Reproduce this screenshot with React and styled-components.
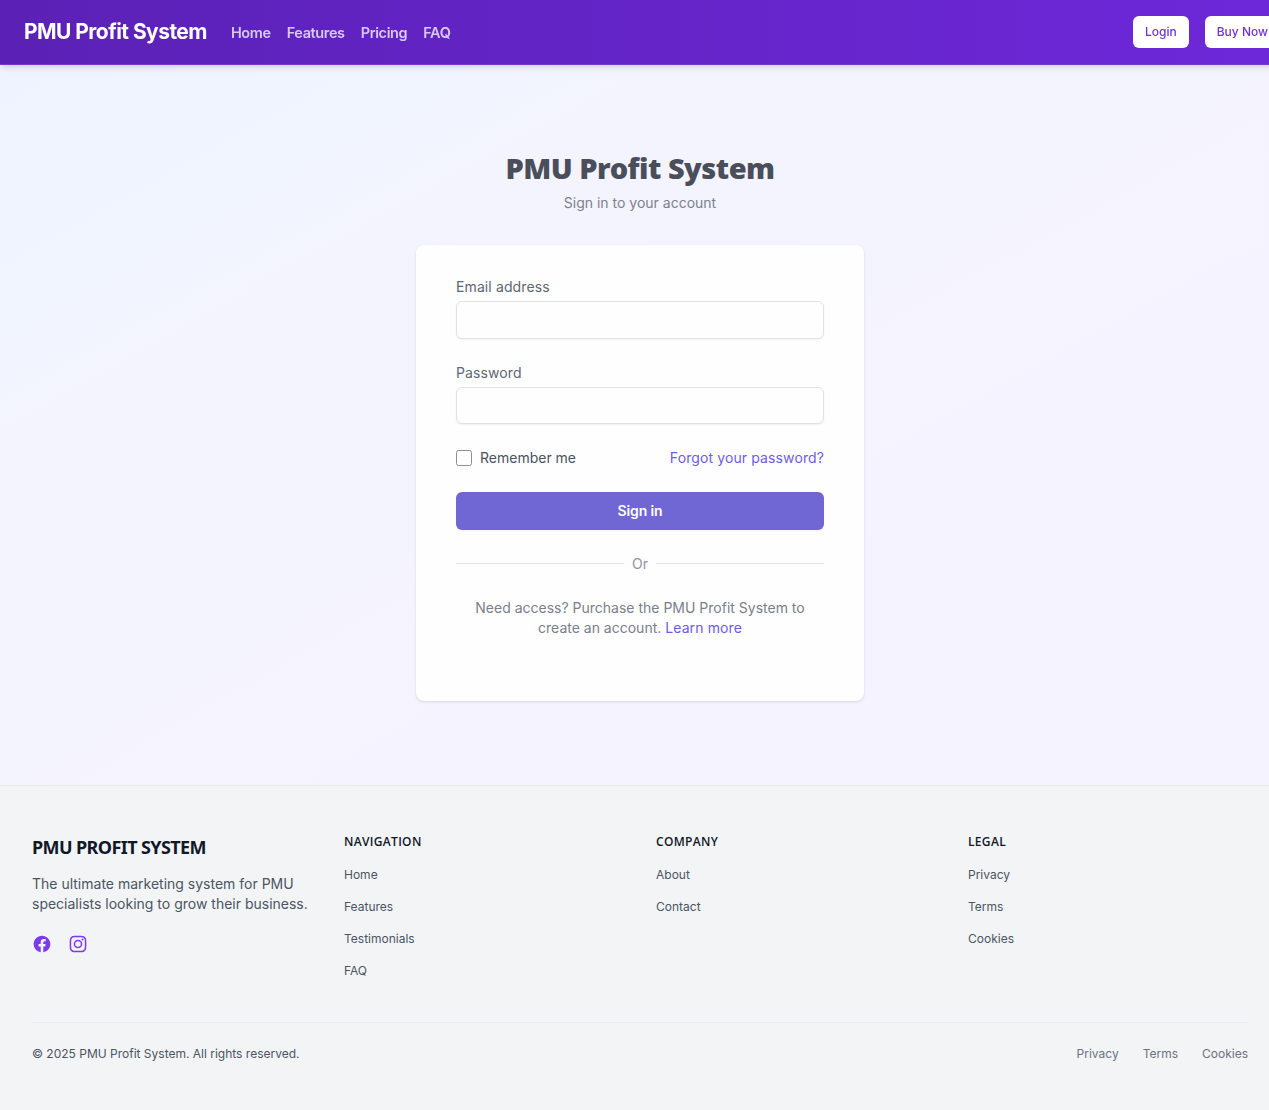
import React from "react";
import styled, { createGlobalStyle, css } from "styled-components";

const GlobalStyle = createGlobalStyle`
  *, *::before, *::after { box-sizing: border-box; }
  html, body { margin: 0; padding: 0; overflow: hidden; }
  body {
    font-family: Inter, "Liberation Sans", sans-serif;
    font-size: 16px;
    line-height: 1.5;
    background: #f3f4f6;
  }
  h1, h2, h3, h4, p, ul { margin: 0; padding: 0; }
  ul { list-style: none; }
  a { color: inherit; text-decoration: none; }
  button, input { font: inherit; }
`;

const headingFont = css`
  font-family: "Noto Sans", "Open Sans", sans-serif;
`;

const Page = styled.div`
  width: 1280px;
  height: 1110px;
  display: flex;
  flex-direction: column;
`;

const Header = styled.header`
  position: relative;
  z-index: 1;
  height: 65px;
  display: flex;
  align-items: center;
  justify-content: space-between;
  padding-left: 24px;
  background: linear-gradient(to right, #5b21b6, #6d28d9);
  border-bottom: 1px solid #7638cf;
  box-shadow: 0 4px 6px -1px rgba(0, 0, 0, 0.1), 0 2px 4px -2px rgba(0, 0, 0, 0.1);
  will-change: transform;
`;

const HeaderGroup = styled.div`
  display: flex;
  align-items: center;
  gap: ${(p) => p.$gap}px;
`;

const Brand = styled.a`
  font-size: 21px;
  line-height: 28px;
  font-weight: 700;
  letter-spacing: -0.55px;
  color: #fff;
`;

const NavLinks = styled.nav`
  display: flex;
  gap: 16px;
  padding-top: 2px;
  font-size: 14.5px;
  line-height: 20px;
  font-weight: 600;
  letter-spacing: -0.38px;
  color: #d9c9f2;
`;

const HeaderButton = styled.button`
  height: 32px;
  padding: 0 12px;
  border: 0;
  border-radius: 6px;
  background: #fff;
  color: #7030dc;
  font-size: 12px;
  line-height: 16px;
  font-weight: 500;
  white-space: nowrap;
`;

const Main = styled.main`
  height: 720px;
  display: flex;
  flex-direction: column;
  align-items: center;
  padding-top: 85px;
  background: linear-gradient(to bottom right, #eff3ff, #f1f5ff 18%, #f3f4fe 27%, #f5f3ff 70%);
`;

const Title = styled.h2`
  ${headingFont}
  font-size: 29px;
  line-height: 36px;
  font-weight: 900;
  letter-spacing: -0.5px;
  color: #4a4e5b;
`;

const Subtitle = styled.p`
  margin-top: 7px;
  font-size: 14px;
  line-height: 20px;
  color: #7c828d;
`;

const Card = styled.section`
  width: 448px;
  height: 456px;
  margin-top: 32px;
  padding: 32px 40px;
  border-radius: 8px;
  background: #fefefe;
  box-shadow: 0 1px 3px rgba(0, 0, 0, 0.1), 0 1px 2px -1px rgba(0, 0, 0, 0.1);
`;

const Form = styled.form`
  display: flex;
  flex-direction: column;
  gap: 24px;
`;

const Field = styled.label`
  display: flex;
  flex-direction: column;
  gap: 4px;
  font-size: 14px;
  line-height: 20px;
  letter-spacing: 0.11px;
  color: #5f6674;
`;

const Input = styled.input`
  width: 100%;
  height: 37.6px;
  padding: 8px 12px;
  border: 1px solid #e0e2e6;
  border-radius: 6px;
  outline: none;
  background: #fefefe;
  box-shadow: 0 1px 2px rgba(0, 0, 0, 0.05);
`;

const OptionsRow = styled.div`
  display: flex;
  align-items: center;
  justify-content: space-between;
  font-size: 14px;
  line-height: 20px;
`;

const Remember = styled.label`
  display: flex;
  align-items: center;
  gap: 8px;
  color: #4b5260;
`;

const Checkbox = styled.input`
  appearance: none;
  width: 16px;
  height: 16px;
  margin: 0;
  border: 1px solid #8d8d8d;
  border-radius: 2.5px;
  background: #fff;
`;

const AccentLink = styled.a`
  letter-spacing: 0.11px;
  color: #6d5ce6;
`;

const SubmitButton = styled.button`
  height: 37.6px;
  border: 0;
  border-radius: 6px;
  background: #7067d5;
  color: #fefefe;
  font-size: 14px;
  line-height: 20px;
  font-weight: 600;
  letter-spacing: -0.1px;
  box-shadow: 0 1px 2px rgba(0, 0, 0, 0.05);
`;

const Divider = styled.div`
  display: flex;
  align-items: center;
  gap: 8px;
  font-size: 14px;
  line-height: 20px;
  color: #8f949e;

  &::before,
  &::after {
    content: "";
    flex: 1;
    height: 1px;
    background: #e2e4e8;
  }
`;

const AccessNote = styled.p`
  text-align: center;
  font-size: 14px;
  line-height: 20px;
  color: #7a808b;
`;

const Footer = styled.footer`
  flex: 1;
  padding: 48px 32px 0;
  border-top: 1px solid #e9eaed;
  background: #f3f4f6;
`;

const FooterGrid = styled.div`
  display: grid;
  grid-template-columns: repeat(4, 1fr);
  gap: 32px;
  height: 188px;
`;

const FooterBrand = styled.h3`
  ${headingFont}
  font-size: 18px;
  line-height: 26px;
  font-weight: 700;
  letter-spacing: -0.6px;
  color: #111827;
`;

const FooterText = styled.p`
  margin-top: 14px;
  font-size: 14px;
  line-height: 20px;
  color: #4b5563;
`;

const Socials = styled.div`
  display: flex;
  gap: 16px;
  margin-top: 19.6px;
  color: #7c3aed;

  svg { display: block; width: 20px; height: 20px; }
`;

const FooterHeading = styled.h4`
  font-family: "Open Sans", "Noto Sans", sans-serif;
  font-size: 12px;
  line-height: 16px;
  font-weight: 600;
  letter-spacing: 0.32px;
  color: #111827;
`;

const FooterList = styled.ul`
  display: flex;
  flex-direction: column;
  gap: 12px;
  margin-top: 15px;
  font-size: 12px;
  line-height: 20px;
  color: #4b5563;
`;

const FooterBottom = styled.div`
  display: flex;
  align-items: center;
  justify-content: space-between;
  padding-top: 23px;
  border-top: 1px solid #ebecef;
  font-size: 12px;
  line-height: 16px;
  color: #4b5563;
`;

const LegalLinks = styled.div`
  display: flex;
  gap: 24px;
  color: #6b7280;
`;

const columns = [
  { title: "NAVIGATION", links: ["Home", "Features", "Testimonials", "FAQ"] },
  { title: "COMPANY", links: ["About", "Contact"] },
  { title: "LEGAL", links: ["Privacy", "Terms", "Cookies"] },
];

const FacebookIcon = () => (
  <svg viewBox="0 0 24 24" fill="currentColor" aria-hidden="true">
    <path fillRule="evenodd" clipRule="evenodd" d="M22 12c0-5.523-4.477-10-10-10S2 6.477 2 12c0 4.991 3.657 9.128 8.438 9.878v-6.987h-2.54V12h2.54V9.797c0-2.506 1.492-3.89 3.777-3.89 1.094 0 2.238.195 2.238.195v2.46h-1.26c-1.243 0-1.63.771-1.63 1.562V12h2.773l-.443 2.89h-2.33v6.988C18.343 21.128 22 16.991 22 12z" />
  </svg>
);

const InstagramIcon = () => (
  <svg viewBox="0 0 24 24" fill="currentColor" aria-hidden="true">
    <path fillRule="evenodd" clipRule="evenodd" d="M12.315 2c2.43 0 2.784.013 3.808.06 1.064.049 1.791.218 2.427.465a4.902 4.902 0 011.772 1.153 4.902 4.902 0 011.153 1.772c.247.636.416 1.363.465 2.427.048 1.067.06 1.407.06 4.123v.08c0 2.643-.012 2.987-.06 4.043-.049 1.064-.218 1.791-.465 2.427a4.902 4.902 0 01-1.153 1.772 4.902 4.902 0 01-1.772 1.153c-.636.247-1.363.416-2.427.465-1.067.048-1.407.06-4.123.06h-.08c-2.643 0-2.987-.012-4.043-.06-1.064-.049-1.791-.218-2.427-.465a4.902 4.902 0 01-1.772-1.153 4.902 4.902 0 01-1.153-1.772c-.247-.636-.416-1.363-.465-2.427-.047-1.024-.06-1.379-.06-3.808v-.63c0-2.43.013-2.784.06-3.808.049-1.064.218-1.791.465-2.427a4.902 4.902 0 011.153-1.772A4.902 4.902 0 015.45 2.525c.636-.247 1.363-.416 2.427-.465C8.901 2.013 9.256 2 11.685 2h.63zm-.081 1.802h-.468c-2.456 0-2.784.011-3.807.058-.975.045-1.504.207-1.857.344-.467.182-.8.398-1.15.748-.35.35-.566.683-.748 1.15-.137.353-.3.882-.344 1.857-.047 1.023-.058 1.351-.058 3.807v.468c0 2.456.011 2.784.058 3.807.045.975.207 1.504.344 1.857.182.466.399.8.748 1.15.35.35.683.566 1.15.748.353.137.882.3 1.857.344 1.054.048 1.37.058 4.041.058h.08c2.597 0 2.917-.01 3.96-.058.976-.045 1.505-.207 1.858-.344.466-.182.8-.398 1.15-.748.35-.35.566-.683.748-1.15.137-.353.3-.882.344-1.857.048-1.055.058-1.37.058-4.041v-.08c0-2.597-.01-2.917-.058-3.96-.045-.976-.207-1.505-.344-1.858a3.097 3.097 0 00-.748-1.15 3.098 3.098 0 00-1.15-.748c-.353-.137-.882-.3-1.857-.344-1.023-.047-1.351-.058-3.807-.058zM12 6.865a5.135 5.135 0 110 10.27 5.135 5.135 0 010-10.27zm0 1.802a3.333 3.333 0 100 6.666 3.333 3.333 0 000-6.666zm5.338-3.205a1.2 1.2 0 110 2.4 1.2 1.2 0 010-2.4z" />
  </svg>
);

export default function App() {
  return (
    <>
      <GlobalStyle />
      <Page>
        <Header>
          <HeaderGroup $gap={24}>
            <Brand href="#">PMU Profit System</Brand>
            <NavLinks>
              {["Home", "Features", "Pricing", "FAQ"].map((label) => (
                <a key={label} href="#">{label}</a>
              ))}
            </NavLinks>
          </HeaderGroup>
          <HeaderGroup $gap={16}>
            <HeaderButton>Login</HeaderButton>
            <HeaderButton>Buy Now</HeaderButton>
          </HeaderGroup>
        </Header>

        <Main>
          <Title>PMU Profit System</Title>
          <Subtitle>Sign in to your account</Subtitle>
          <Card>
            <Form onSubmit={(e) => e.preventDefault()}>
              <Field>
                Email address
                <Input type="email" />
              </Field>
              <Field>
                Password
                <Input type="password" />
              </Field>
              <OptionsRow>
                <Remember>
                  <Checkbox type="checkbox" />
                  Remember me
                </Remember>
                <AccentLink href="#">Forgot your password?</AccentLink>
              </OptionsRow>
              <SubmitButton type="submit">Sign in</SubmitButton>
              <Divider>Or</Divider>
              <AccessNote>
                Need access? Purchase the PMU Profit System to create an account.{" "}
                <AccentLink href="#">Learn more</AccentLink>
              </AccessNote>
            </Form>
          </Card>
        </Main>

        <Footer>
          <FooterGrid>
            <div>
              <FooterBrand>PMU PROFIT SYSTEM</FooterBrand>
              <FooterText>
                The ultimate marketing system for PMU specialists looking to grow their business.
              </FooterText>
              <Socials>
                <a href="#" aria-label="Facebook"><FacebookIcon /></a>
                <a href="#" aria-label="Instagram"><InstagramIcon /></a>
              </Socials>
            </div>
            {columns.map((column) => (
              <div key={column.title}>
                <FooterHeading>{column.title}</FooterHeading>
                <FooterList>
                  {column.links.map((link) => (
                    <li key={link}><a href="#">{link}</a></li>
                  ))}
                </FooterList>
              </div>
            ))}
          </FooterGrid>
          <FooterBottom>
            <p>© 2025 PMU Profit System. All rights reserved.</p>
            <LegalLinks>
              <a href="#">Privacy</a>
              <a href="#">Terms</a>
              <a href="#">Cookies</a>
            </LegalLinks>
          </FooterBottom>
        </Footer>
      </Page>
    </>
  );
}
